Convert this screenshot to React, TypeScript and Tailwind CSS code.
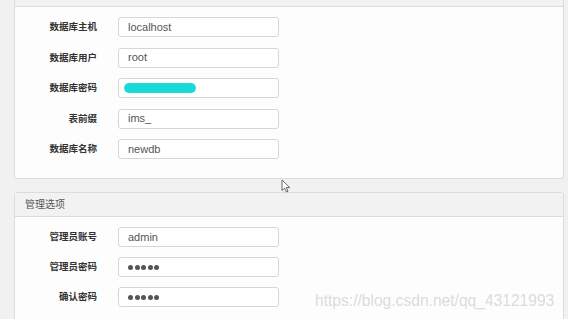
import React from "react";

type Field = { label: string; value?: string; kind?: "text" | "dots" | "mask" };

const dbFields: Field[] = [
  { label: "数据库主机", value: "localhost" },
  { label: "数据库用户", value: "root" },
  { label: "数据库密码", kind: "mask" },
  { label: "表前缀", value: "ims_" },
  { label: "数据库名称", value: "newdb" },
];

const adminFields: Field[] = [
  { label: "管理员账号", value: "admin" },
  { label: "管理员密码", kind: "dots" },
  { label: "确认密码", kind: "dots" },
];

function Row({ field }: { field: Field }) {
  return (
    <div className="flex h-[20px] items-center">
      <label className="w-[82px] shrink-0 text-right text-[9.5px] font-bold leading-none text-[#333]">
        {field.label}
      </label>
      <div className="ml-[21px] flex h-[20px] w-[161px] items-center rounded-[3px] border border-[#d6d6d6] bg-white pl-[9px] text-[11px] text-[#555]">
        {field.kind === "mask" ? (
          <span className="ml-[-4px] mt-[-1px] h-[10px] w-[72px] rounded-full bg-[#19d9d9]" />
        ) : field.kind === "dots" ? (
          <span className="flex gap-[1.5px]">
            {[0, 1, 2, 3, 4].map((i) => (
              <span key={i} className="h-[5px] w-[5px] rounded-full bg-[#555]" />
            ))}
          </span>
        ) : (
          field.value
        )}
      </div>
    </div>
  );
}

export default function App() {
  return (
    <div
      className="relative h-[319px] w-[568px] overflow-hidden bg-[#f1f1f2] pl-[14px] pr-[4px]"
      style={{ fontFamily: '"Liberation Sans", "Noto Sans CJK SC", sans-serif' }}
    >
      <div className="flex flex-col gap-[13px]">
        <section className="rounded-b-[3px] border border-t-0 border-[#dcdcdc] bg-[#fefdfe]">
          <div className="h-[7px] border-b border-[#dcdcdc] bg-[#f2f2f3]" />
          <div className="flex flex-col gap-[10.5px] pt-[10px] pb-[19px]">
            {dbFields.map((f) => (
              <Row key={f.label} field={f} />
            ))}
          </div>
        </section>

        <section className="rounded-t-[3px] border border-[#dcdcdc] bg-[#fefdfe]">
          <div className="flex h-[24px] items-center border-b border-[#dcdcdc] bg-[#f2f2f3] pl-[10px] text-[10px] text-[#555]">
            管理选项
          </div>
          <div className="flex flex-col gap-[10px] pt-[10px] pb-[20px]">
            {adminFields.map((f) => (
              <Row key={f.label} field={f} />
            ))}
          </div>
        </section>
      </div>

      {/* mouse cursor */}
      <svg className="absolute left-[281px] top-[179px]" width="10" height="14" viewBox="0 0 10 14">
        <path d="M1 1 L1 11.5 L3.6 9.2 L5.4 13 L7 12.3 L5.3 8.6 L8.8 8.6 Z" fill="#fff" stroke="#666" strokeWidth="1" strokeLinejoin="round" />
      </svg>

      {/* watermark */}
      <div className="absolute left-[315px] top-[293px] text-[15.6px] leading-none text-[#d2d2d2]/80">
        https://blog.csdn.net/qq_43121993
      </div>
    </div>
  );
}
